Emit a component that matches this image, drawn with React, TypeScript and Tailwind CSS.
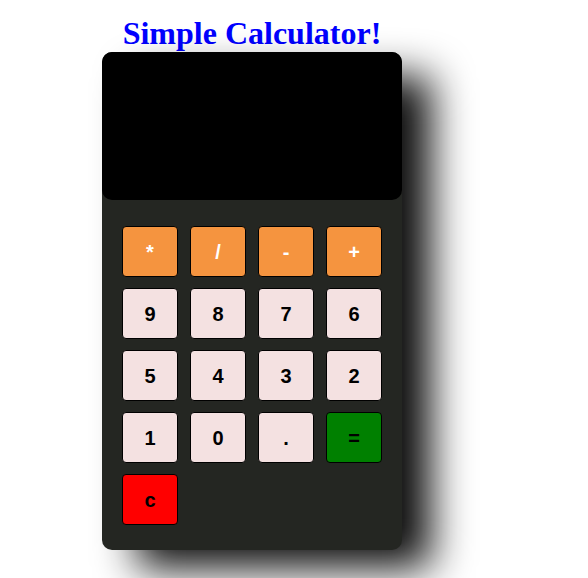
import React from "react";

const rows: { label: string; kind: "op" | "num" | "eq" | "clear" }[][] = [
  [
    { label: "*", kind: "op" },
    { label: "/", kind: "op" },
    { label: "-", kind: "op" },
    { label: "+", kind: "op" },
  ],
  [
    { label: "9", kind: "num" },
    { label: "8", kind: "num" },
    { label: "7", kind: "num" },
    { label: "6", kind: "num" },
  ],
  [
    { label: "5", kind: "num" },
    { label: "4", kind: "num" },
    { label: "3", kind: "num" },
    { label: "2", kind: "num" },
  ],
  [
    { label: "1", kind: "num" },
    { label: "0", kind: "num" },
    { label: ".", kind: "num" },
    { label: "=", kind: "eq" },
  ],
  [{ label: "c", kind: "clear" }],
];

const kindClass = {
  op: "bg-[#f5943f] text-white",
  num: "bg-[#f4e1e1] text-black",
  eq: "bg-[#008000] text-black",
  clear: "bg-[#ff0000] text-black",
};

const App = () => {
  return (
    <div className="w-[504px] flex flex-col items-center pt-[14px] pb-[28px] bg-white">
      {/* Title */}
      <h1 className="text-[32px] leading-[38px] font-bold text-[#0000ff] font-['Liberation_Serif',serif]">
        Simple Calculator!
      </h1>

      {/* Calculator body */}
      <div className="w-[300px] h-[498px] bg-[#242622] rounded-[10px] shadow-[32px_21px_40px_-3px_#0d0d0d] flex flex-col">
        <div className="h-[148px] bg-black rounded-[10px]" />

        <div className="grid grid-cols-4 gap-x-3 gap-y-[11px] px-5 pt-[26px]">
          {rows.flat().map((b) => (
            <button
              key={b.label}
              className={`h-[51px] rounded-[4px] border border-black text-[20px] font-bold font-['Liberation_Sans',Arial,sans-serif] ${kindClass[b.kind]}`}
            >
              {b.label}
            </button>
          ))}
        </div>
      </div>
    </div>
  );
};

export default App;
